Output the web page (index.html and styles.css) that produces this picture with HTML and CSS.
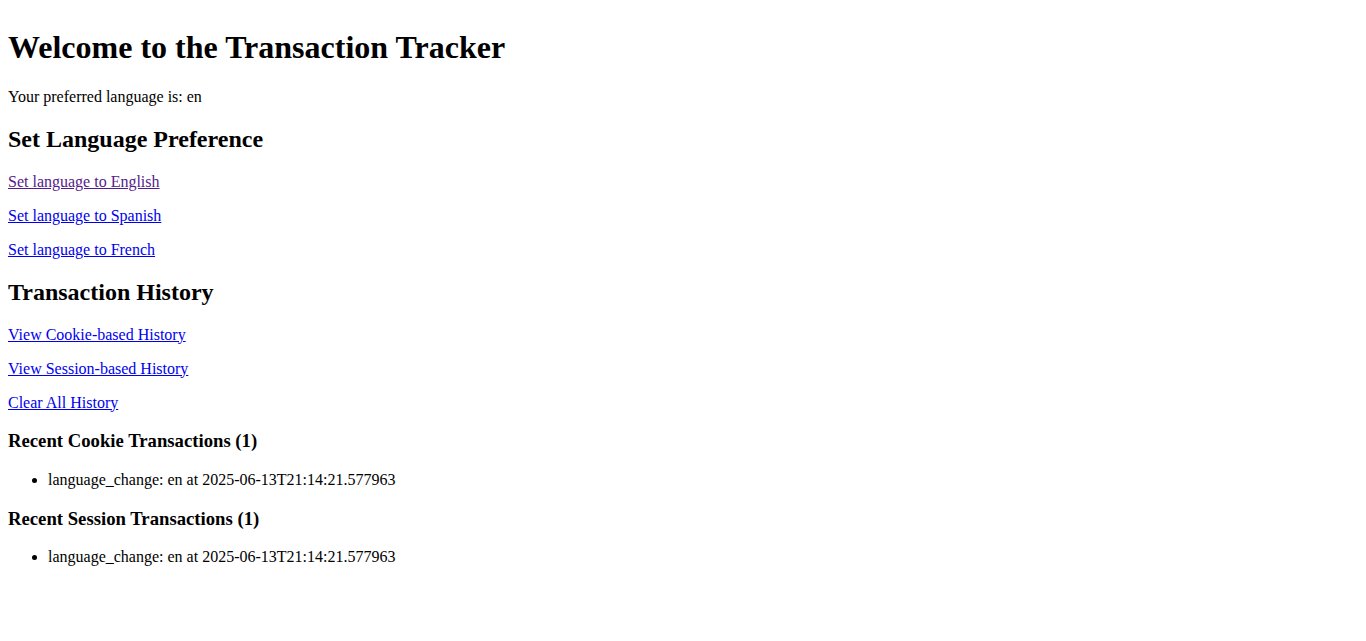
FILE: index.html
```html
<!DOCTYPE html>
<html>
<head>
<meta charset="utf-8">
<title>Transaction Tracker</title>
<link rel="stylesheet" href="styles.css">
</head>
<body class="page">
<h1 class="title">Welcome to the Transaction Tracker</h1>
<p class="text">Your preferred language is: en</p>
<h2 class="section">Set Language Preference</h2>
<p class="text"><a class="link link-visited" href="#en">Set language to English</a></p>
<p class="text"><a class="link" href="#es">Set language to Spanish</a></p>
<p class="text"><a class="link" href="#fr">Set language to French</a></p>
<h2 class="section">Transaction History</h2>
<p class="text"><a class="link" href="#cookie">View Cookie-based History</a></p>
<p class="text"><a class="link" href="#session">View Session-based History</a></p>
<p class="text"><a class="link" href="#clear">Clear All History</a></p>
<h3 class="subsection">Recent Cookie Transactions (1)</h3>
<ul class="list">
<li>language_change: en at 2025-06-13T21:14:21.577963</li>
</ul>
<h3 class="subsection">Recent Session Transactions (1)</h3>
<ul class="list">
<li>language_change: en at 2025-06-13T21:14:21.577963</li>
</ul>
</body>
</html>
```
FILE: styles.css
```css
.page {
  margin: 8px;
  font-family: "Liberation Serif", "Times New Roman", serif;
  font-size: 16px;
  color: #000;
  background: #fff;
}
.title {
  font-size: 32px;
  font-weight: bold;
  margin: 21.44px 0;
}
.section {
  font-size: 24px;
  font-weight: bold;
  margin: 19.92px 0;
}
.subsection {
  font-size: 18.72px;
  font-weight: bold;
  margin: 18.72px 0;
}
.text {
  margin: 16px 0;
}
.link {
  color: #0000ee;
  text-decoration: underline;
}
.link-visited {
  color: #551a8b;
}
.list {
  margin: 16px 0;
  padding-left: 40px;
  list-style: disc;
}
```
